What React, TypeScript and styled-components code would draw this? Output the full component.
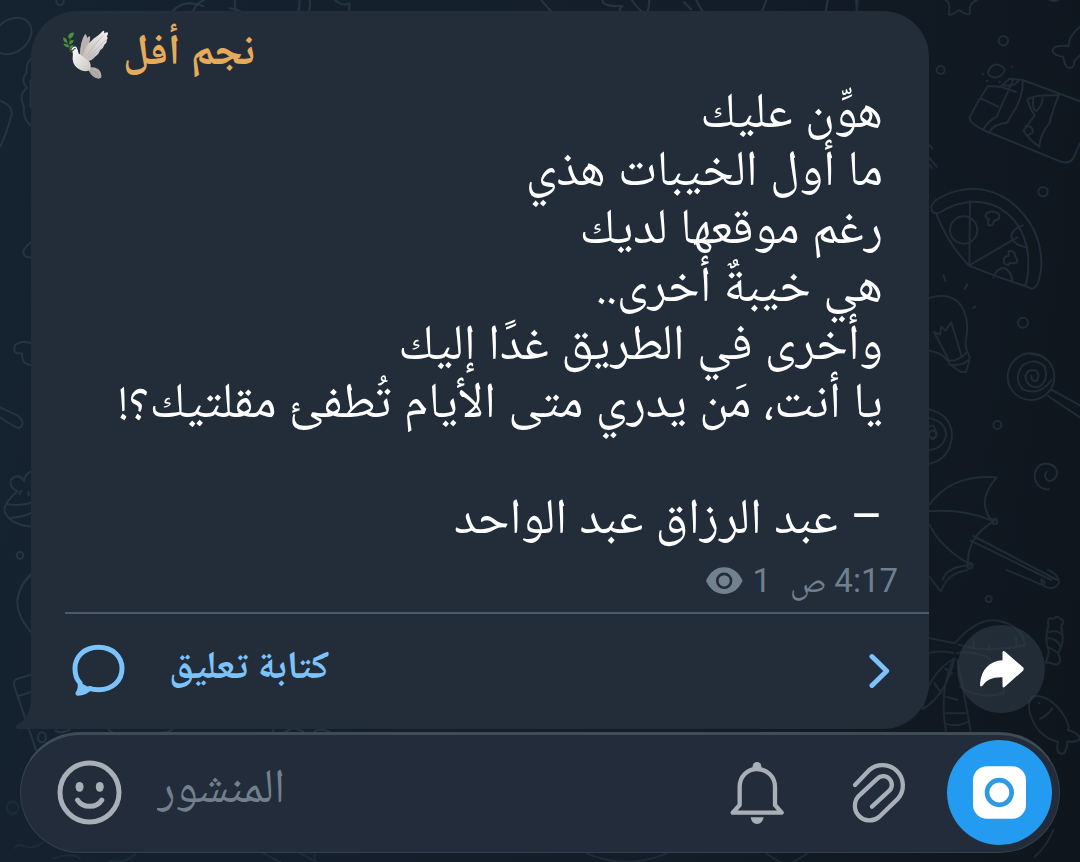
import React from "react";
import styled, { createGlobalStyle } from "styled-components";

const colors = {
  bubble: "#222d39",
  composer: "#222c3a",
  accent: "#7cc2fb",
  name: "#e6ab5a",
  muted: "#6f7f8f",
  icon: "#a9afb6",
  blue: "#229bf0",
};

const fonts = {
  ui: `Roboto, "Noto Naskh Arabic", "DejaVu Sans", sans-serif`,
  marks: `"Noto Naskh Arabic", Roboto, "DejaVu Sans", sans-serif`,
};

const GlobalStyle = createGlobalStyle`
  * { box-sizing: border-box; }
  body {
    margin: 0;
    background: #121c27;
    font-family: ${fonts.ui};
  }
  button {
    border: 0;
    padding: 0;
    background: none;
    font: inherit;
    color: inherit;
    cursor: pointer;
  }
  svg { display: block; flex: none; }
`;

const Screen = styled.div`
  position: relative;
  min-height: 100vh;
  display: flex;
  flex-direction: column;
  justify-content: flex-end;
  padding: 11px 20px 9px;
  overflow: hidden;
  background:
    linear-gradient(90deg, rgba(14, 21, 28, 0) 60%, rgba(14, 21, 28, 0.6) 100%),
    linear-gradient(100deg, #15222f 0%, #14202c 35%, #121a25 85%, #0f161e 100%);
`;

const WallpaperSvg = styled.svg`
  position: absolute;
  inset: 0;
  width: 100%;
  height: 100%;
  fill: none;
  stroke: #253540;
  stroke-width: 6;
  stroke-linecap: round;
  stroke-linejoin: round;
`;

const MessageRow = styled.main`
  position: relative;
  display: flex;
  align-items: flex-end;
  gap: 28px;
  padding: 0 15px 0 11px;
`;

const Bubble = styled.article`
  position: relative;
  flex: 1;
  min-width: 0;
  border-radius: 46px 46px 46px 0;
  background: ${colors.bubble};
`;

const Tail = styled.svg`
  position: absolute;
  right: 100%;
  bottom: 0;
  fill: ${colors.bubble};
`;

const Header = styled.header`
  display: flex;
  align-items: center;
  gap: 14px;
  height: 70px;
  padding: 18px 31px 0;
`;

const ChannelName = styled.h1`
  margin: 0;
  padding-bottom: 12px;
  font-size: 43px;
  line-height: 56px;
  font-weight: 700;
  color: ${colors.name};
`;

const Poem = styled.p`
  margin: 0;
  padding: 0 46px 0 31px;
  font-size: 50px;
  line-height: 58px;
  color: #fff;
  white-space: pre-line;
`;

const Marks = styled.span`
  font-family: ${fonts.marks};
  line-height: 0;
`;

const Meta = styled.div`
  display: flex;
  align-items: center;
  gap: 19px;
  height: 67px;
  padding: 4px 31px 0;
  font-size: 33px;
  line-height: 40px;
  color: ${colors.muted};
`;

const Views = styled.span`
  display: flex;
  align-items: center;
  gap: 9px;
`;

const Thread = styled.footer`
  padding-left: 34px;
`;

const CommentButton = styled.button`
  display: flex;
  align-items: center;
  width: 100%;
  height: 117px;
  padding: 0 39px 2px 7px;
  border-top: 2px solid #4b5a68;
  color: ${colors.accent};
`;

const CommentLabel = styled.span`
  flex: 1;
  padding: 0 0 12px 44px;
  text-align: left;
  font-size: 39px;
  line-height: 48px;
  font-weight: 700;
`;

const ShareButton = styled.button`
  display: flex;
  align-items: center;
  justify-content: center;
  width: 88px;
  height: 88px;
  margin-bottom: 16px;
  border-radius: 50%;
  background: rgba(46, 60, 72, 0.6);
`;

const Composer = styled.form`
  position: relative;
  display: flex;
  align-items: center;
  height: 121px;
  margin-top: 3px;
  padding: 0 7px 2px 36px;
  border: 1px solid #333f4b;
  border-top: 3px solid #404b58;
  border-radius: 61px;
  background: ${colors.composer};
`;

const MessageInput = styled.input`
  flex: 1;
  min-width: 0;
  height: 90px;
  padding: 0 35px 14px;
  border: 0;
  outline: 0;
  background: none;
  text-align: left;
  font-family: ${fonts.ui};
  font-size: 48px;
  color: #fff;
  &::placeholder {
    color: #72808d;
    opacity: 1;
  }
`;

const Tools = styled.div`
  display: flex;
  align-items: center;
  gap: 67px;
  margin-right: 40px;
`;

const CameraButton = styled.button`
  display: flex;
  align-items: center;
  justify-content: center;
  width: 105px;
  height: 105px;
  border-radius: 50%;
  background: ${colors.blue};
`;

function Wallpaper() {
  return (
    <WallpaperSvg viewBox="0 0 1080 862" preserveAspectRatio="xMidYMid slice" aria-hidden="true">
      <g transform="scale(.33333)">
        <ellipse cx="36" cy="108" rx="64" ry="48" transform="rotate(-38 36 108)" />
        <circle cx="180" cy="4" r="11" />
        <path d="M110 168Q76 176 80 218Q60 240 80 264Q54 286 72 320Q66 360 100 382M92 240V320M0 302Q42 318 34 346Q20 402 0 440" />
      </g>
      <g transform="translate(130 0) scale(.51)" strokeWidth="4">
        <path d="M74 36Q96-6 144 12M120 34Q126 6 146 0M196 16Q220 18 232 36M206 0V24M326 36Q334 12 332 0M346 36Q356 12 352 0M402 0Q418 14 430 6V36M806 0L838 36M926 0Q926 14 966 12L960 18L972 40M984 0Q1018 50 1018 0M1086 4L1100 18M1110 0L1130 36M1234 36L1248 0M1362 36L1368 0M1424 0L1426 36" />
      </g>
      <g transform="translate(0 200) scale(.33333)">
        <path d="M100 122Q54 154 78 170L100 174M100 434Q74 416 46 434Q34 464 66 460Q66 500 100 494M0 622L52 646Q80 670 58 684Q46 684 0 652M100 812Q76 818 72 842Q54 818 34 838Q24 860 52 874Q0 920 18 944Q42 978 100 980M22 912Q64 920 100 906M32 954Q74 950 100 936M64 872L58 882M86 876V886M100 1118Q64 1140 52 1200" />
        <circle cx="60" cy="1066" r="10" />
      </g>
      <g transform="translate(0 570) scale(.33333)">
        <path d="M100 10Q4 92 100 194M100 312L48 328Q38 336 44 352L108 540M54 378L100 364M166 482Q180 492 210 480M326 480L336 486M480 488Q500 490 516 480M820 480V488M850 488L880 474L910 484M944 484Q960 474 990 486" />
        <ellipse cx="126" cy="502" rx="12" ry="15" />
        <circle cx="38" cy="713" r="18" stroke="#1d2b37" />
        <path stroke="#1d2b37" d="M46 834Q50 820 72 828Q100 840 130 816M160 866Q220 846 240 866M330 874Q386 880 406 850M790 850L840 876M900 850L950 876M944 850V876M1760 850Q1880 900 2000 850M2300 852L2340 876M2420 852L2380 876" />
      </g>
      <g transform="translate(840 0) scale(.33333)" stroke="#202c37">
        <path d="M316 0Q334 10 326 42Q330 50 358 30Q384 50 390 40Q384 10 412 0M630 0Q644 6 656 0M50 30L54 4M720 80Q684 110 686 138Q636 134 638 154Q644 168 670 170Q674 206 690 204Q704 202 702 184L720 166" />
        <path d="M444 258L482 260L508 236L548 240L720 304M444 258Q412 304 388 354Q390 370 430 390L660 484Q688 494 700 474L720 430M420 294L474 320M482 260L528 276M520 238L470 350Q440 366 430 390L446 398Q462 370 502 368Q512 346 524 330Q550 286 548 240M494 256Q520 260 534 244M656 286Q574 284 562 300Q570 326 584 346Q560 380 550 392Q568 420 598 440Q600 402 628 370Q642 320 656 286M580 294Q576 334 590 332Q606 318 608 294M556 378Q580 376 578 398L566 404" />
        <path d="M444 216Q454 190 476 194Q500 206 492 216Q478 236 460 232Q444 228 444 216M428 222H430M516 200H518M440 242H442M478 246H480M268 436L278 446M268 474L290 500M268 494L276 504" />
        <circle cx="490" cy="122" r="14" /><circle cx="302" cy="210" r="12" /><circle cx="609" cy="575" r="14" />
        <path d="M280 638Q264 622 288 600Q402 532 508 602Q606 680 604 796Q598 868 574 866L556 858Q568 820 564 762Q548 654 462 616Q382 586 294 640ZM288 640Q324 732 386 796Q470 832 556 858M390 602L388 796L532 712M548 676Q512 690 514 712Q528 740 562 742M460 832Q470 804 494 804Q516 816 516 844" />
        <circle cx="371" cy="690" r="41" />
        <path d="M440 640Q458 628 476 642Q484 660 462 662Q460 680 446 676Q440 662 448 658Q430 652 440 640M506 754Q526 750 526 770Q540 788 522 790Q508 786 506 794Q488 796 492 776Q494 768 506 768ZM310 826L316 842M382 854L374 866" />
      </g>
      <g transform="translate(840 290) scale(.33333)" stroke="#1f2c35">
        <path d="M266 24Q352 0 376 74Q386 110 378 146Q374 168 382 184M268 182Q308 188 324 214M282 126L326 210M282 126L300 134L304 110L316 122L334 98L364 196M324 212Q360 214 382 184L390 204Q372 230 330 224ZM334 226L362 246H378L388 212M400 54L406 50" />
        <circle cx="549" cy="98" r="15" /><circle cx="472" cy="405" r="12" />
        <circle cx="573" cy="260" r="70" />
        <path d="M574 258Q574 276 590 272Q602 256 588 242Q562 234 556 260Q560 292 594 292Q628 274 614 230Q584 200 546 228Q520 268 548 298Q600 320 634 270M620 210Q604 194 574 192M636 300L720 346M624 318L720 382" />
        <path d="M266 358Q336 374 336 440Q328 510 266 522M266 384Q318 394 318 436Q310 476 266 480M268 410Q284 400 284 418Q298 440 276 448" /><circle cx="278" cy="433" r="11" />
        <path d="M620 546Q608 558 626 574Q650 572 652 544Q640 514 602 524Q576 544 588 576Q602 600 626 598M268 644Q336 550 470 562Q420 620 440 664Q446 690 464 692Q380 742 384 820Q300 770 268 704M268 664Q370 656 456 692M390 826Q320 830 308 870M400 738L652 870M392 752L634 870" />
        <circle cx="464" cy="694" r="8" /><circle cx="390" cy="827" r="8" />
      </g>
      <g transform="translate(840 570) scale(.33333)" stroke="#1e2a33">
        <path d="M268 20L302 64M384 0Q320 10 304 62M500 0L610 46Q620 38 606 28Q598 30 614 50Q644 62 656 40Q660 14 624 0" />
        <circle cx="446" cy="87" r="9" />
        <path d="M268 204L344 220Q412 140 476 152Q550 168 554 226Q430 250 356 224M268 248Q318 240 340 250M344 264Q258 316 248 418Q322 370 344 264M350 250Q380 240 440 260Q500 310 490 370Q420 390 360 350M340 270Q296 360 318 484M352 270Q376 390 392 484M318 380L352 390M318 430H374M316 460Q350 474 386 454M400 210L402 234M448 228V240M528 205L530 230M284 340L304 370M316 296L336 310" />
        <path d="M626 166Q618 140 640 146Q654 134 660 146Q676 150 664 168Q676 220 654 250Q668 276 650 284Q622 276 616 278Q626 260 626 244Q612 200 626 166M626 186Q648 180 664 192M622 204Q652 204 662 232M622 230L650 246" />
        <path d="M582 378Q634 376 674 440Q690 470 684 480Q720 490 720 508Q702 520 682 514Q680 552 664 552Q646 546 654 516Q590 500 570 430Q560 390 582 378M600 446Q620 440 636 416M596 400H598" />
        <path d="M640 780Q620 830 584 860" />
      </g>
    </WallpaperSvg>
  );
}

function Dove() {
  return (
    <svg width="47" height="50" viewBox="186 92 142 150" role="img" aria-label="dove">
      <defs>
        <linearGradient id="wing" x1="1" y1="0" x2="0" y2="1">
          <stop offset="0" stopColor="#f2f0ee" />
          <stop offset="1" stopColor="#bdb8b5" />
        </linearGradient>
        <linearGradient id="body" x1="0" y1="0" x2="1" y2="1">
          <stop offset="0" stopColor="#ffffff" />
          <stop offset="1" stopColor="#c9c5c2" />
        </linearGradient>
      </defs>
      <path d="M240 168Q240 128 256 103Q262 108 262 116Q268 108 271 112Q272 120 268 130L256 178Z" fill="#b9b4b1" />
      <path d="M246 180Q252 140 282 117Q298 108 310 94Q316 94 313 102Q325 94 325 102Q324 108 321 112Q327 114 321 122Q323 130 314 136Q312 146 302 152Q298 164 286 172Q276 184 262 186Z" fill="url(#wing)" />
      <path d="M262 168Q282 136 310 108M266 174Q294 144 318 122M270 178Q294 158 310 140M250 160Q252 134 263 118" fill="none" stroke="#a8a19e" strokeWidth="1.5" />
      <path d="M264 206Q282 200 296 210Q308 222 304 236Q298 241 286 236Q270 226 264 206Z" fill="#b5afac" />
      <path d="M272 210Q290 216 300 234M270 216Q280 230 294 236" fill="none" stroke="#8f8986" strokeWidth="1.5" />
      <path d="M214 150Q220 138 229 142Q234 150 236 162Q254 176 270 188Q276 204 268 214Q250 220 234 208Q214 194 219 164Q219 156 214 150Z" fill="url(#body)" />
      <path d="M223 146L211 157L221 155Z" fill="#57524c" />
      <circle cx="225" cy="148" r="2.5" fill="#33302d" />
      <path d="M212 158Q208 138 196 122M212 158Q210 128 210 116" fill="none" stroke="#3d6b35" strokeWidth="2.5" />
      <g fill="#4c8f3f">
        <path d="M204 112Q208 98 222 99Q222 114 208 118Z" />
        <path d="M189 114Q200 114 203 130Q190 130 189 114Z" />
        <path d="M208 128Q214 118 222 123Q218 134 208 134Z" />
        <path d="M190 134Q202 130 208 142Q196 148 190 134Z" />
        <path d="M210 142Q216 134 222 138Q218 146 211 148Z" />
      </g>
    </svg>
  );
}

const EyeIcon = () => (
  <svg width="37" height="27" viewBox="318 50 112 82" aria-hidden="true">
    <path d="M318 92Q336 51 373 51T429 92Q410 132 373 132T318 92Z" fill="#73808e" />
    <circle cx="373" cy="92" r="21" fill="#73808e" stroke={colors.bubble} strokeWidth="8" />
  </svg>
);

const CommentIcon = () => (
  <svg width="53" height="53" viewBox="216 225 160 158" fill="none" stroke="currentColor" strokeWidth="15" strokeLinejoin="round" aria-hidden="true">
    <path d="M296 234C340 234 367 263 367 298S340 362 296 362C286 362 277 361 269 358C259 367 248 372 234 373C241 363 242 352 240 341C230 331 225 315 225 298C225 263 252 234 296 234Z" />
    <path d="M241 343L269 358L236 373Z" fill="currentColor" strokeWidth="4" />
  </svg>
);

const ChevronIcon = () => (
  <svg width="21" height="36" viewBox="88 249 64 108" fill="none" stroke="currentColor" strokeWidth="15" strokeLinecap="round" strokeLinejoin="round" aria-hidden="true">
    <path d="M97 259L142 303L97 347" />
  </svg>
);

const ShareIcon = () => (
  <svg width="45" height="38" viewBox="56 298 134 112" fill="#fff" aria-hidden="true">
    <path d="M126 304Q127 298 133 302L187 349Q191 354 187 359L133 407Q127 412 126 405V379C96 378 80 386 67 403Q59 410 59 400C62 355 88 330 126 328Z" />
  </svg>
);

const SmileIcon = () => (
  <svg width="65" height="65" viewBox="170 569 196 196" fill="none" stroke={colors.icon} strokeWidth="15" strokeLinecap="round" aria-hidden="true">
    <circle cx="268" cy="667" r="89" />
    <path d="M232 690C248 715 289 715 305 690" />
    <g fill={colors.icon} stroke="none">
      <ellipse cx="238" cy="650" rx="12" ry="15" />
      <ellipse cx="299" cy="650" rx="12" ry="15" />
    </g>
  </svg>
);

const BellIcon = () => (
  <svg width="54" height="64" viewBox="391 630 162 192" fill="none" stroke={colors.icon} strokeWidth="13" strokeLinejoin="round" aria-hidden="true">
    <path d="M420 762V708C420 676 443 654 472 654S526 676 526 708V762L546 785H399Z" />
    <circle cx="472" cy="646" r="13" fill={colors.icon} stroke="none" />
    <path d="M453 799H492Q488 819 472 819T453 799Z" fill={colors.icon} stroke="none" />
  </svg>
);

const ClipIcon = () => (
  <svg width="56" height="64" viewBox="755 633 168 192" fill="none" stroke={colors.icon} strokeWidth="13" strokeLinecap="round" strokeLinejoin="round" aria-hidden="true">
    <path d="M767 705L810 660A61 61 0 0 1 896 746L839 801A44 44 0 0 1 777 739L834 686A25 25 0 0 1 870 722L818 770" />
  </svg>
);

const CameraIcon = () => (
  <svg width="53" height="53" viewBox="39 648 159 158" aria-hidden="true">
    <rect x="39" y="648" width="159" height="158" rx="42" fill="#fff" />
    <circle cx="118" cy="727" r="37" fill="none" stroke="#2e9ae6" strokeWidth="14" />
  </svg>
);

const lines = [
  { text: "هوِّن عليك" },
  { text: "ما أول الخيبات هذي" },
  { text: "رغم موقعها لديك" },
  { text: "هي خيبةٌ أخرى", marks: ".." },
  { text: "وأخرى في الطريق غدًا إليك" },
  { text: "يا أنت، مَن يدري متى الأيام تُطفئ مقلتيك", marks: "؟!" },
  { text: "" },
  { text: "– عبد الرزاق عبد الواحد" },
];

export default function App() {
  return (
    <Screen>
      <GlobalStyle />
      <Wallpaper />
      <MessageRow>
        <Bubble>
          <Tail width="16" height="30" viewBox="0 0 16 30" aria-hidden="true">
            <path d="M16 0Q15 19 2 26Q-1 29 3 30H16Z" />
          </Tail>
          <Header>
            <Dove />
            <ChannelName dir="rtl">نجم أفل</ChannelName>
          </Header>
          <Poem dir="rtl">
            {lines.map((line, i) => (
              <React.Fragment key={i}>
                {i > 0 && "\n"}
                {line.text}
                {line.marks && <Marks>{line.marks}</Marks>}
              </React.Fragment>
            ))}
          </Poem>
          <Meta dir="rtl">
            <time dateTime="04:17">4:17 ص</time>
            <Views>
              1
              <EyeIcon />
            </Views>
          </Meta>
          <Thread>
            <CommentButton type="button">
              <CommentIcon />
              <CommentLabel dir="rtl">كتابة تعليق</CommentLabel>
              <ChevronIcon />
            </CommentButton>
          </Thread>
        </Bubble>
        <ShareButton type="button" aria-label="مشاركة">
          <ShareIcon />
        </ShareButton>
      </MessageRow>
      <Composer onSubmit={(e) => e.preventDefault()}>
        <button type="button" aria-label="الرموز التعبيرية">
          <SmileIcon />
        </button>
        <MessageInput dir="rtl" aria-label="المنشور" placeholder="المنشور" />
        <Tools>
          <button type="button" aria-label="الإشعارات">
            <BellIcon />
          </button>
          <button type="button" aria-label="إرفاق ملف">
            <ClipIcon />
          </button>
        </Tools>
        <CameraButton type="button" aria-label="الكاميرا">
          <CameraIcon />
        </CameraButton>
      </Composer>
    </Screen>
  );
}
